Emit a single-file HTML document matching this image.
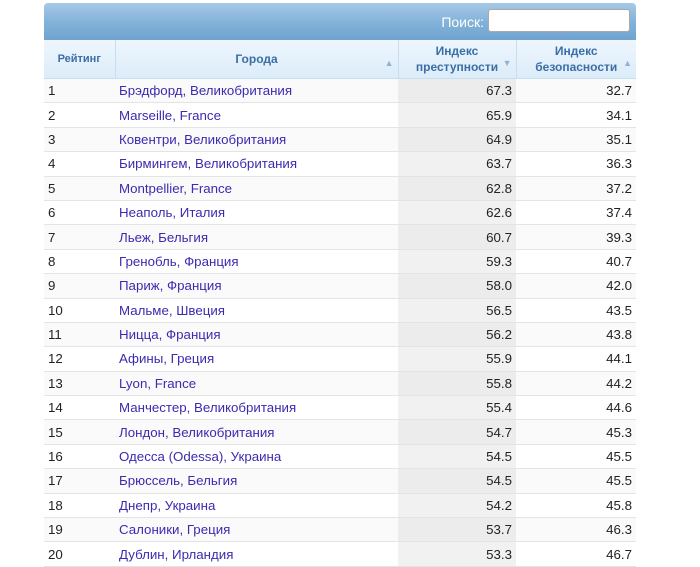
<!DOCTYPE html>
<html><head><meta charset="utf-8"><style>
body{margin:0;background:#fff;font-family:"Liberation Sans","DejaVu Sans",sans-serif;}
.wrap{position:absolute;left:44px;top:3px;width:592px;}
.bar{height:37px;background:linear-gradient(#a6c9e6,#84b3d9 50%,#6fa3d0);border-radius:4px 4px 0 0;position:relative;}
.bar span{position:absolute;right:152px;top:11px;color:#fff;font-size:14px;}
.bar input{position:absolute;right:6px;top:6px;width:140px;height:21px;border:1px solid #aaa;border-radius:3px;background:#fff;padding:0;}
table{border-collapse:collapse;width:592px;table-layout:fixed;font-size:13.3px;}
th{height:38px;background:linear-gradient(#eef6fd,#dcecf9);color:#3a6ea5;font-size:12px;font-weight:bold;border-left:1px solid #c6def2;border-bottom:1px solid #c6def2;position:relative;line-height:16px;padding:0;}
th:first-child{border-left:none;font-size:11px}
th i{position:absolute;right:4px;top:15px;font-style:normal;font-size:9px;color:#8fb3d6}
td{height:23.4px;border-bottom:1px solid #e4e4e4;padding:0 4px;color:#222;white-space:nowrap;}
td:nth-child(2){color:#3b2bb0}
td:nth-child(3),td:nth-child(4){text-align:right;}
td:nth-child(3){background:#f1f1f1}
tr:nth-child(odd) td{background:#fafafa}
tr:nth-child(odd) td:nth-child(3){background:#ececec}
</style></head><body><div class="wrap">
<div class="bar"><span>Поиск:</span><input></div>
<table><colgroup><col style="width:71px"><col style="width:283px"><col style="width:118px"><col style="width:120px"></colgroup>
<thead><tr><th>Рейтинг</th><th>Города<i>▲</i></th><th>Индекс<br>преступности<i>▼</i></th><th>Индекс<br>безопасности<i>▲</i></th></tr></thead>
<tbody>
<tr><td>1</td><td>Брэдфорд, Великобритания</td><td>67.3</td><td>32.7</td></tr>
<tr><td>2</td><td>Marseille, France</td><td>65.9</td><td>34.1</td></tr>
<tr><td>3</td><td>Ковентри, Великобритания</td><td>64.9</td><td>35.1</td></tr>
<tr><td>4</td><td>Бирмингем, Великобритания</td><td>63.7</td><td>36.3</td></tr>
<tr><td>5</td><td>Montpellier, France</td><td>62.8</td><td>37.2</td></tr>
<tr><td>6</td><td>Неаполь, Италия</td><td>62.6</td><td>37.4</td></tr>
<tr><td>7</td><td>Льеж, Бельгия</td><td>60.7</td><td>39.3</td></tr>
<tr><td>8</td><td>Гренобль, Франция</td><td>59.3</td><td>40.7</td></tr>
<tr><td>9</td><td>Париж, Франция</td><td>58.0</td><td>42.0</td></tr>
<tr><td>10</td><td>Мальме, Швеция</td><td>56.5</td><td>43.5</td></tr>
<tr><td>11</td><td>Ницца, Франция</td><td>56.2</td><td>43.8</td></tr>
<tr><td>12</td><td>Афины, Греция</td><td>55.9</td><td>44.1</td></tr>
<tr><td>13</td><td>Lyon, France</td><td>55.8</td><td>44.2</td></tr>
<tr><td>14</td><td>Манчестер, Великобритания</td><td>55.4</td><td>44.6</td></tr>
<tr><td>15</td><td>Лондон, Великобритания</td><td>54.7</td><td>45.3</td></tr>
<tr><td>16</td><td>Одесса (Odessa), Украина</td><td>54.5</td><td>45.5</td></tr>
<tr><td>17</td><td>Брюссель, Бельгия</td><td>54.5</td><td>45.5</td></tr>
<tr><td>18</td><td>Днепр, Украина</td><td>54.2</td><td>45.8</td></tr>
<tr><td>19</td><td>Салоники, Греция</td><td>53.7</td><td>46.3</td></tr>
<tr><td>20</td><td>Дублин, Ирландия</td><td>53.3</td><td>46.7</td></tr>
</tbody></table></div></body></html>
